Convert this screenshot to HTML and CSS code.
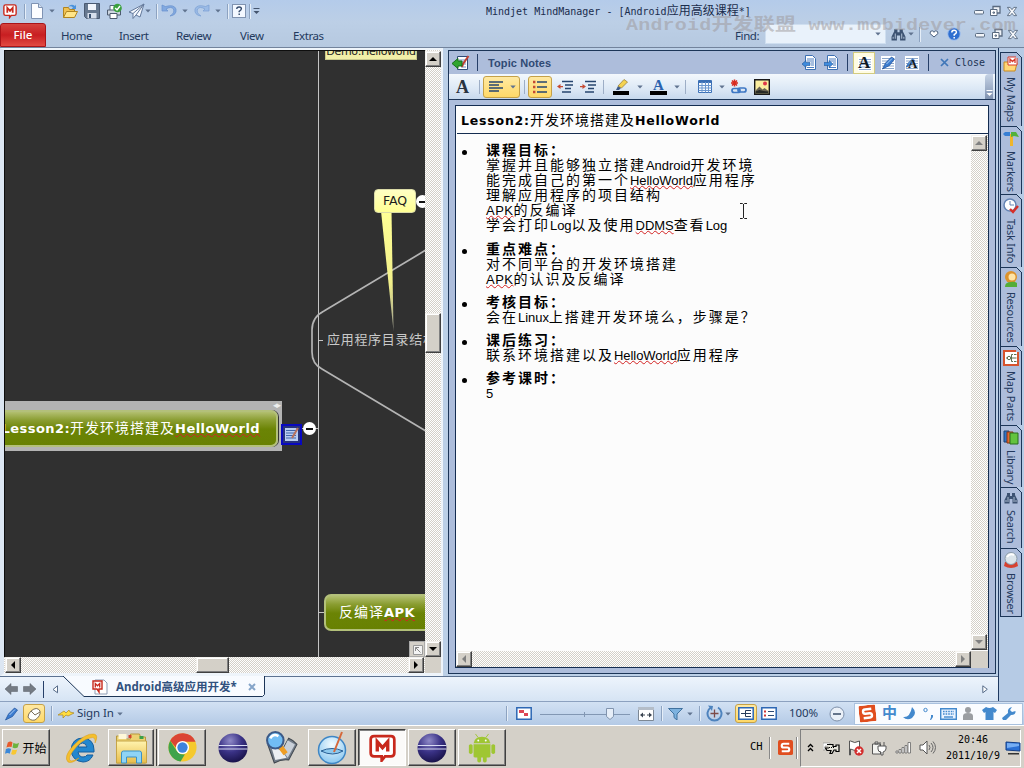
FILE: index.html
```html
<!DOCTYPE html>
<html lang="zh-CN">
<head>
<meta charset="utf-8">
<title>Mindjet MindManager</title>
<link rel="stylesheet" href="styles.css">
</head>
<body>
<svg class="defs" width="0" height="0">
  <defs>
    <radialGradient id="orb" cx=".4" cy=".25" r=".8"><stop offset="0" stop-color="#8f8ac8"/><stop offset=".5" stop-color="#3a3286"/><stop offset="1" stop-color="#161044"/></radialGradient>
    <radialGradient id="sky" cx=".5" cy=".3" r=".8"><stop offset="0" stop-color="#f2fbff"/><stop offset="1" stop-color="#7cc0ee"/></radialGradient>
    <linearGradient id="gold" x2="0" y2="1"><stop offset="0" stop-color="#fff3ae"/><stop offset="1" stop-color="#e8bd4a"/></linearGradient>
    <linearGradient id="call" x2="0" y2="1"><stop offset="0" stop-color="#ffff96"/><stop offset=".6" stop-color="#f2f08a"/><stop offset="1" stop-color="#9a9a90"/></linearGradient>
  </defs>
  <symbol id="m" viewBox="0 0 16 16"><path d="M3 1h10q2 0 2 2v8q0 2-2 2H9.500l-2 2.500V13H3q-2 0-2-2V3q0-2 2-2z" fill="#fff" stroke="#c8281c" stroke-width="1.600"/><path d="M4.900 10V4.300L8 7.800l3.100-3.500V10" fill="none" stroke="#c8281c" stroke-width="2"/></symbol>
  <symbol id="arr" viewBox="0 0 6 4"><path d="M.3.500h5.400L3 3.500z" fill="#60738f"/></symbol>
  <symbol id="doc" viewBox="0 0 14 16"><path d="M1.500.500h7l4 4v11h-11z" fill="#fcfdff" stroke="#7f93b3"/><path d="M8.500.500v4h4" fill="#d4e0f0" stroke="#7f93b3"/></symbol>
  <symbol id="open" viewBox="0 0 16 16"><path d="M1.500 14.500v-10h5l1 2h5v3" fill="#f0c252" stroke="#b08420"/><path d="M1.500 14.500l3-6h11l-3 6z" fill="#ffe58a" stroke="#b08420"/><path d="M6 4q3-4 7-1l1-1.500V6H9.500L11 4.500Q9 2.500 6 4z" fill="#4b93dc"/></symbol>
  <symbol id="save" viewBox="0 0 16 16"><path d="M.5.500h15v15H2.500l-2-2z" fill="#66788f" stroke="#4a5a72"/><path d="M4 1h8v6H4z" fill="#f2f6fc"/><path d="M3.500 10h9v5.500h-9z" fill="#d7dfec"/><path d="M5 11h2v4H5z" fill="#37506f"/></symbol>
  <symbol id="print" viewBox="0 0 16 16"><path d="M4 7V2h6v5" fill="#fff" stroke="#56667d"/><path d="M1.500 6.500h13v5h-13z" fill="#cdd6e0" stroke="#4d5b6e"/><path d="M4 10h7v5H4z" fill="#fff" stroke="#4d5b6e"/><circle cx="11.500" cy="4.500" r="4.300" fill="#3aa03e"/><path d="M9.200 4.500l1.800 2 3-4" fill="none" stroke="#fff" stroke-width="1.400"/></symbol>
  <symbol id="send" viewBox="0 0 17 16"><path d="M16 1L1 9l4 1.500v5L8 12l4 2z" fill="#f5f9ff" stroke="#63799b"/><path d="M16 1L5 10.500M16 1L8 12" fill="none" stroke="#63799b"/></symbol>
  <symbol id="undo" viewBox="0 0 16 14"><path d="M1 1v6h6L5 5q5-3 7.500 0Q14 9 9 12q7-1 6-7-2-5-10.500-2.500z" fill="#82a9e0" stroke="#6790cd" stroke-width=".7"/></symbol>
  <symbol id="redo" viewBox="0 0 16 14"><path d="M15 1v6H9l2-2q-5-3-7.500 0Q2 9 7 12 0 11 1 5q2-5 10.500-2.500z" fill="#9bbbe6" stroke="#7a9fd3" stroke-width=".7"/></symbol>
  <symbol id="min" viewBox="0 0 12 12"><rect x="1.500" y="5.500" width="9" height="3.500" rx="1" fill="#f3f6fa" stroke="#596a80"/></symbol>
  <symbol id="rest" viewBox="0 0 12 12"><path d="M4 4V1.500h7V8H8" fill="#eef2f7" stroke="#596a80" stroke-width="1.300"/><path d="M1.500 4.500H8v6H1.500zM4 7h1.500v1.200H4z" fill="#fff" stroke="#596a80"/></symbol>
  <symbol id="x" viewBox="0 0 12 12"><path d="M1 1.500h3l2 2.500 2-2.500h3L7.700 6 11 10.500H8L6 8l-2 2.500H1L4.300 6z" fill="#f7f9fc" stroke="#596a80"/></symbol>
  <symbol id="bin" viewBox="0 0 14 12"><path d="M3 1h3v3h2V1h3v2l2.500 5v3.500H8.500V7h-3v4.500H.5V8L3 3z" fill="#3c5272"/><path d="M2 8v2M4 5v5M10 5v5M12 8v2" stroke="#a9bad0"/></symbol>
  <symbol id="heart" viewBox="0 0 10 8"><path d="M5 7L1 3.500Q1 .7 3.200.8 4.500 1 5 2.300 5.500 1 6.800.8 9 .7 9 3.500z" fill="#fff" stroke="#4a5f7d"/></symbol>
  <symbol id="help" viewBox="0 0 14 14"><circle cx="7" cy="7" r="6.300" fill="#2f6fd0" stroke="#aac6ef"/><path d="M4.800 5.500q0-2.300 2.300-2.300T9.400 5.200Q9.400 6.200 7.200 7.700v1M7.200 10v1.500" fill="none" stroke="#fff" stroke-width="1.500"/></symbol>
  <symbol id="helpb" viewBox="0 0 14 14"><rect x=".5" y=".5" width="13" height="13" fill="#f3f8ff" stroke="#8093b0"/><path d="M4.800 5q0-2 2.300-2t2.300 1.800Q9.400 6 7.200 7.300v1M7.200 9.500V11" fill="none" stroke="#32496b" stroke-width="1.400"/></symbol>
  <symbol id="cust" viewBox="0 0 7 8"><path d="M.5 1.500h6" stroke="#44556e"/><path d="M.5 4h6L3.500 7z" fill="#44556e"/></symbol>
  <symbol id="tonotes" viewBox="0 0 18 16"><path d="M5.500 1.500h10v13h-10z" fill="#fff" stroke="#2f4b78"/><path d="M7 5h6M7 7h7M7 9h7M9 12h5" stroke="#6a8cbd"/><path d="M16.500 1L11 9l-1 3" stroke="#c24032" stroke-width="2" fill="none"/><path d="M0 8.500l6-5V6h4v5H6v2.500z" fill="#2fa52e" stroke="#186d1e"/></symbol>
  <symbol id="pgl" viewBox="0 0 15 15"><path d="M3.500.500h7l3 3v11h-10z" fill="#fff" stroke="#3d70b2"/><path d="M5 4h7M5 6h7M9 8h3M9 10h3M5 12.500h7" stroke="#4f7fbf"/><path d="M0 9l4-3.500v2h4v3H4v2z" fill="#3f8bdc" stroke="#1e5698" stroke-width=".6"/></symbol>
  <symbol id="pgr" viewBox="0 0 15 15"><path d="M3.500.500h7l3 3v11h-10z" fill="#fff" stroke="#3d70b2"/><path d="M5 4h7M5 6h7M9 8h3M9 10h3M5 12.500h7" stroke="#4f7fbf"/><path d="M9 9L5 5.500v2H0v3h5v2z" fill="#3f8bdc" stroke="#1e5698" stroke-width=".6"/></symbol>
  <symbol id="lines" viewBox="0 0 14 14"><path d="M0 0h14v14H0z" fill="#fff"/><path d="M1 2.500h12M1 5h12M1 7.500h12M1 10h12M1 12.500h12" stroke="#8ba6cb"/></symbol>
  <symbol id="pen" viewBox="0 0 14 14"><path d="M1.500 13L4.500 7l6-6 3 2L8.500 9.500z" fill="#3b7cd0" stroke="#1d4f98" stroke-width=".7"/><path d="M5.500 8l5.500-5.500" stroke="#a9cdf5"/></symbol>
  <symbol id="al" viewBox="0 0 16 12"><path d="M1 1h14M1 4h10M1 7h14M1 10h10" stroke="#27466f" stroke-width="1.300"/></symbol>
  <symbol id="bul" viewBox="0 0 16 14"><path d="M5 2h10M5 7h10M5 12h10" stroke="#27466f" stroke-width="1.500"/><path d="M1 .8h2.400v2.400H1zM1 5.800h2.400v2.400H1zM1 10.800h2.400v2.400H1z" fill="#c54a32"/></symbol>
  <symbol id="outd" viewBox="0 0 16 14"><path d="M5 1.500h11M8 5h8M8 8.500h6M5 12h9" stroke="#27466f" stroke-width="1.400"/><path d="M0 6.500L3.500 4v2H6v1.200H3.500V9z" fill="#c54a32"/></symbol>
  <symbol id="ind" viewBox="0 0 16 14"><path d="M5 1.500h11M8 5h8M8 8.500h6M5 12h9" stroke="#27466f" stroke-width="1.400"/><path d="M6 6.500L2.500 4v2H0v1.200h2.500V9z" fill="#c54a32"/></symbol>
  <symbol id="hl" viewBox="0 0 18 16"><path d="M1 12h16v4H1z" fill="#000"/><path d="M4 11l2-4 3 2-2 2z" fill="#3e5b8b"/><path d="M6 7l6-6.500L15.500 3 9.500 9z" fill="#f4d352" stroke="#8f7630" stroke-width=".7"/></symbol>
  <symbol id="table" viewBox="0 0 14 13"><path d="M.5.500h13v12H.5z" fill="#f6faff" stroke="#3a6fb5"/><path d="M.5 2h13" stroke="#3a6fb5" stroke-width="2"/><path d="M.5 5.500h13M.5 8h13M.5 10.500h13M4 2v10.500M7.500 2v10.500M10.500 2v10.500" stroke="#6b97cf"/></symbol>
  <symbol id="link" viewBox="0 0 17 15"><path d="M4.500.500v7M1 4h7M2 1.500l5 5M7 1.500l-5 5" stroke="#d92b20" stroke-width="1.500"/><rect x="2" y="9.500" width="8" height="4" rx="2" fill="none" stroke="#3f78c4" stroke-width="1.700"/><rect x="8" y="9" width="8" height="4" rx="2" fill="none" stroke="#3f78c4" stroke-width="1.700"/></symbol>
  <symbol id="pic" viewBox="0 0 16 16"><path d="M.7.700h14.600v14.600H.7z" fill="#fbeea0" stroke="#18181a" stroke-width="1.400"/><path d="M1.500 13V11.500L5.500 7.500l3 3 2-1.500 4 3V13z" fill="#6b6553"/><path d="M1.400 12.500l4-1.500 4 1 5 .5V14.600H1.400z" fill="#272a26"/><circle cx="11" cy="4.500" r="2" fill="#de3848"/></symbol>
  <symbol id="au" viewBox="0 0 8 8"><path d="M0 6h8L4 2z"/></symbol>
  <symbol id="ad" viewBox="0 0 8 8"><path d="M0 2h8L4 6z"/></symbol>
  <symbol id="ale" viewBox="0 0 8 8"><path d="M6 0v8L2 4z"/></symbol>
  <symbol id="ari" viewBox="0 0 8 8"><path d="M2 0v8l4-4z"/></symbol>
  <symbol id="mapsi" viewBox="0 0 16 16"><path d="M1 6h5l1 1h7l-2 8H1z" fill="#ffd777" stroke="#c98a20"/><path d="M5 1h9v8H5z" fill="#fff" stroke="#d63a2c"/><path d="M7 7V3l2.500 2.500L12 3v4" fill="none" stroke="#d63a2c" stroke-width="1.300"/></symbol>
  <symbol id="mark" viewBox="0 0 16 16"><path d="M7 4h3v12H7z" fill="#efb52a"/><path d="M0 4l2-2h5v4H2z" fill="#377fd4"/><path d="M8 2h5l3 5-5-1-3 1z" fill="#52b13a"/></symbol>
  <symbol id="task" viewBox="0 0 16 16"><circle cx="7" cy="7" r="6" fill="#fff" stroke="#6484b4" stroke-width="1.500"/><path d="M7 3v4h4" fill="none" stroke="#6484b4"/><path d="M7 11l3 3 5-6" fill="none" stroke="#d62f29" stroke-width="2.400"/></symbol>
  <symbol id="res" viewBox="0 0 16 16"><circle cx="8" cy="6" r="6" fill="#dc922c"/><circle cx="9" cy="6" r="3.500" fill="#ffe4a6"/><path d="M2 16q0-5 6-5 3-1 6 1v4z" fill="#54ad38"/></symbol>
  <symbol id="parts" viewBox="0 0 16 16"><path d="M1 1h14v14H1z" fill="#fff" stroke="#d7532e" stroke-width="2"/><path d="M3 8h3M10 4.500H8.500v7H10M11 4.500h2.500M9 8h4.500M11 11.500h2.500" stroke="#5e7050" fill="none"/><circle cx="6" cy="8" r="1.700" fill="#fff" stroke="#5e7050"/></symbol>
  <symbol id="lib" viewBox="0 0 16 16"><path d="M1 2h5v11H1z" fill="#2d74c8" stroke="#1d4273"/><path d="M4 3h6v11H4z" fill="#e46831" stroke="#843516"/><path d="M7 4h8v11H7z" fill="#63c33e" stroke="#286c1d"/></symbol>
  <symbol id="brow" viewBox="0 0 16 16"><path d="M2 10h12l1 4q-7 4-14 0z" fill="#d74130"/><circle cx="8" cy="6.500" r="6" fill="#dbe4ea" stroke="#8a9aa8"/><path d="M4 5q3-4 7-2" stroke="#fff" stroke-width="2" fill="none"/></symbol>
  <symbol id="nav" viewBox="0 0 13 12"><path d="M0 6l6-5.500V3.500h6.500v5H6v3z" fill="#747b84" stroke="#565c64" stroke-width=".5"/></symbol>
  <symbol id="mouse" viewBox="0 0 16 14"><path d="M5 4q6-5 9 0 1 5-5 9-5 1-7-3 0-3 3-6z" fill="#fff" stroke="#7b705a"/><path d="M5 4l4 4M9 8l5-3" stroke="#7b705a" fill="none"/></symbol>
  <symbol id="bolt" viewBox="0 0 16 10"><path d="M0 6l6-4 2 2 3-3 1 2 4 1-6 3-2-1-3 3V6z" fill="#ffdc3f" stroke="#aa8724" stroke-width=".7"/></symbol>
  <symbol id="filt" viewBox="0 0 15 12"><path d="M.5.500h14L9 6v6L6 9.500V6z" fill="#7db2df" stroke="#41729f"/></symbol>
  <symbol id="rot" viewBox="0 0 17 17"><path d="M5 2.500A7 7 0 1 0 12 2.500" fill="none" stroke="#4e83bd" stroke-width="2"/><path d="M2 .5l5 .5-1 5z" fill="#4e83bd"/><path d="M8.500 4.500v8M4.500 8.500h8" stroke="#7d4b49" stroke-width="1.300"/></symbol>
  <symbol id="mapv" viewBox="0 0 16 13"><path d="M.8.800h14.400v11.400H.8z" fill="#fff" stroke="#2d67b4" stroke-width="1.500"/><path d="M3 6.500h4M13 3.500H7.500v6H13M7.500 6.500H13" stroke="#273c5b" fill="none"/></symbol>
  <symbol id="outv" viewBox="0 0 16 13"><path d="M.8.800h14.400v11.400H.8z" fill="#fff" stroke="#2d67b4" stroke-width="1.500"/><path d="M7 4.500h6M7 8.500h6" stroke="#2d4b75"/><path d="M3 3.500h2v2H3zM3 7.500h2v2H3z" fill="#d0383a"/></symbol>
  <symbol id="over" viewBox="0 0 16 13"><path d="M.8.800h14.400v11.400H.8z" fill="#fff" stroke="#2d67b4" stroke-width="1.500"/><path d="M3 3h5v3H3zM8 6h4v3H8z" fill="#dc4654"/></symbol>
  <symbol id="fit" viewBox="0 0 16 14"><path d="M.5.500h15v13H.5z" fill="#fff" stroke="#7c8794"/><path d="M0 0h16v3H0z" fill="#b4bdc8"/><path d="M2 8l3-2.500v2h2v1H5v2zM14 8l-3-2.500v2H9v1h2v2z" fill="#3b4451"/></symbol>
  <symbol id="slide" viewBox="0 0 90 14"><path d="M0 7.500h90M44.500 5v5" stroke="#8297b3"/><path d="M66.500 1.500h7v8l-3.500 3-3.500-3z" fill="#e6eef8" stroke="#8194ae"/></symbol>
  <symbol id="s" viewBox="0 0 16 16"><rect width="16" height="16" rx="2" fill="#e04e1f"/><path d="M12 4H6Q4 4 4 6t2 2h4q2 0 2 2t-2 2H4" fill="none" stroke="#fff" stroke-width="2.300"/></symbol>
  <symbol id="moon" viewBox="0 0 13 13"><path d="M9 0q6 6 0 11-5 3-9-1 7 1 9-10z" fill="#4389cd"/></symbol>
  <symbol id="punct" viewBox="0 0 11 14"><circle cx="2.500" cy="3" r="1.700" fill="none" stroke="#4389cd"/><path d="M8 8h2v2L8 13H7l1-3z" fill="#4389cd"/></symbol>
  <symbol id="kbd" viewBox="0 0 17 12"><path d="M.7.700h15.600v10.600H.7z" fill="#eaf3ff" stroke="#4389cd" stroke-width="1.400"/><path d="M3 3.500h11M3 6h11" stroke="#4389cd" stroke-width="1.600" stroke-dasharray="1.600 1"/><path d="M4 9h9" stroke="#4389cd" stroke-width="1.400"/></symbol>
  <symbol id="per" viewBox="0 0 10 13"><circle cx="5" cy="3" r="3" fill="#9b9ea2"/><path d="M0 13V9q0-3 5-3t5 3v4z" fill="#9b9ea2"/></symbol>
  <symbol id="shirt" viewBox="0 0 15 13"><path d="M4 0q3.500 2 7 0l4 3-2 3-1.500-1v8h-8V5L2 6 0 3z" fill="#4389cd"/></symbol>
  <symbol id="wr" viewBox="0 0 14 13"><path d="M10 0L8 3l2 2 3.500-1Q14 8 9 8l-5 5H1l-1-2 6-5Q5 1 10 0z" fill="#4389cd"/></symbol>
  <symbol id="win" viewBox="0 0 16 16"><path d="M3 2q3-2 5 0L7 7Q4 6 1.500 7.500z" fill="#e75a2b"/><path d="M9 2.500q3 2 6 0l-1.500 5q-3 1.500-5.500 0z" fill="#6cb33e"/><path d="M1 9q3-1.500 5.500 0l-1.500 5Q3 12.500 0 14z" fill="#3b88d8"/><path d="M8 9.500q2.500 1.500 5 0L11.500 14.500q-3 1.500-5 0z" fill="#f8c732"/></symbol>
  <symbol id="ie" viewBox="0 0 32 32"><path d="M25 20H12q1 5 5 5 3 0 4-2h6q-3 7-10 7Q6 29 5 18 6 6 17 6q11 1 11 12v2zM12 15h9q-1-4-4.500-4T12 15z" fill="#2387cf" stroke="#155f9f"/><path d="M2 30q-5-5 5-16Q19 1 28 2q5 1 1 9 1-7-5-5-9 2-17 13-6 8-2 10 3 0 8-3-7 6-11 4z" fill="#f4bf2e" stroke="#d89a18" stroke-width=".5"/></symbol>
  <symbol id="fold" viewBox="0 0 32 32"><path d="M1 7V4h8l2 3h4V2h9l1 3h5v26H1z" fill="#ecd172" stroke="#b6983e"/><path d="M3 2h8v5H3z" fill="#fff8d8"/><path d="M13 3h3v3h-3z" fill="#d5452f"/><path d="M24 4h4v3h-4z" fill="#3b9f49"/><path d="M1 9h30v22H1z" fill="url(#gold)" stroke="#c6a446"/><path d="M6 31V21q0-2 2-2h16q2 0 2 2v10h-5v-6H11v6z" fill="#8fd4f5" stroke="#3b91c6"/></symbol>
  <symbol id="chr" viewBox="0 0 32 32"><circle cx="16" cy="16" r="14.500" fill="#f5c92d"/><path d="M3.300 9A14.500 14.500 0 0 1 29.500 10H16q-6 0-6 7z" fill="#db4535"/><path d="M3.300 9L10.500 20q3 4 8 3L14 30.400A14.500 14.500 0 0 1 3.300 9z" fill="#40a34b"/><circle cx="16" cy="16" r="6.800" fill="#fff"/><circle cx="16" cy="16" r="5.300" fill="#3e83dc"/></symbol>
  <symbol id="ecl" viewBox="0 0 32 32"><circle cx="16" cy="16" r="14.500" fill="url(#orb)"/><path d="M1.500 13.500h29M1.500 17h29" stroke="#d9dcf3" stroke-width="1.200"/></symbol>
  <symbol id="sch" viewBox="0 0 32 32"><path d="M3 14l14 4 6-11q5 2 8 6l-8 15q-7-1-14 3z" fill="#727c89" stroke="#40474f"/><path d="M6 15l10 4 5 7-11 2z" fill="#eceff3"/><path d="M22 9l-5 10 5 7 7-13z" fill="#c9d0d9"/><path d="M14 14l6 8" stroke="#ef9e25" stroke-width="5"/><circle cx="10" cy="9" r="8" fill="#71bdf4" stroke="#3c5a88" stroke-width="2"/><path d="M5 7q3-5 8-2" stroke="#fff" stroke-width="2.500" fill="none"/></symbol>
  <symbol id="ink" viewBox="0 0 32 32"><circle cx="16" cy="18" r="13.500" fill="url(#sky)" stroke="#3e86c5" stroke-width="1.500"/><path d="M5 19q11-5 22 0-10 6-22 0z" fill="#8ec9ee" stroke="#285f95"/><path d="M26 0l-6 15-2 5" stroke="#d6683a" stroke-width="2" fill="none"/></symbol>
  <symbol id="andr" viewBox="0 0 32 32"><path d="M7 11q1-7 9-7t9 7zM7 12h18v13q0 1-2 1h-2v4q-2 3-4 0v-4h-2v4q-2 3-4 0v-4H9q-2 0-2-1zM2 13q2-2 4 0v8q-2 3-4 0zM26 13q2-2 4 0v8q-2 3-4 0z" fill="#9fc633"/><path d="M9 1l3 4M23 1l-3 4" stroke="#9fc633"/><circle cx="12" cy="8" r="1" fill="#fff"/><circle cx="20" cy="8" r="1" fill="#fff"/></symbol>
  <symbol id="chev" viewBox="0 0 7 9"><path d="M1 4l2.500-2.500L6 4M1 8l2.500-2.500L6 8" fill="none" stroke="#000" stroke-width="1.300"/></symbol>
  <symbol id="cam" viewBox="0 0 17 14"><path d="M0 2h7v3H2v4H0z" fill="#fff" stroke="#777" stroke-width=".5"/><path d="M4 3.500h6v2h3V4h3v6.500h-3V9h-2l-2 3.500H7l1-3H4L2.500 7H6" fill="#e7e5dc" stroke="#000" stroke-width="1.200"/><path d="M6 6.500h5" stroke="#000" stroke-dasharray="1 1"/></symbol>
  <symbol id="flag" viewBox="0 0 16 16"><path d="M1.500 15V1h1q4 3 9 0v8q-5 3-9 0v6z" fill="#fff" stroke="#555"/><circle cx="11" cy="11" r="4.700" fill="#d32f2f"/><path d="M9 9l4 4M13 9l-4 4" stroke="#fff" stroke-width="1.500"/></symbol>
  <symbol id="plug" viewBox="0 0 16 16"><path d="M1.500 4h8v10h-8zM4 2h3v2H4z" fill="#f4f4f1" stroke="#555"/><path d="M7 6h8v3q-1 3-3 3v3h-2v-3q-3 0-3-3zM9 2v4M13 2v4" fill="#fff" stroke="#555"/></symbol>
  <symbol id="sig" viewBox="0 0 17 13"><path d="M1 10h2v2H1zM4 8.500h2V12H4zM7 6.500h2V12H7zM10 4.500h2V12h-2zM13 1.500h2.500V12H13z" fill="#fff" stroke="#666" stroke-width=".8"/></symbol>
  <symbol id="spk" viewBox="0 0 17 15"><path d="M1 5h3l4-4v13l-4-4H1z" fill="#fff" stroke="#555"/><path d="M10 5q2 2.500 0 5M12 3q4 4.500 0 9M14 1.500q5 6 0 12" fill="none" stroke="#666"/></symbol>
  <symbol id="mon" viewBox="0 0 16 14"><path d="M1 1l14 1v8L1 9z" fill="#2c70d4" stroke="#123d85"/><path d="M2 2l12 .8V5L2 7z" fill="#77aef3"/><path d="M3 12h11v1.500H3z" fill="#333"/></symbol>
</svg>

<div class="app">
  <header class="title">
    <svg width="14" height="16"><use href="#m"/></svg><i class="sep"></i>
    <svg width="14" height="16"><use href="#doc"/></svg><svg width="6" height="4"><use href="#arr"/></svg>
    <svg width="16" height="16"><use href="#open"/></svg><svg width="16" height="16"><use href="#save"/></svg><svg width="16" height="17"><use href="#print"/></svg><svg width="17" height="16"><use href="#send"/></svg><svg width="6" height="4"><use href="#arr"/></svg><i class="sep"></i>
    <svg width="16" height="14"><use href="#undo"/></svg><svg width="6" height="4"><use href="#arr"/></svg><svg width="16" height="14"><use href="#redo"/></svg><svg width="6" height="4"><use href="#arr"/></svg><i class="sep"></i>
    <svg width="14" height="14"><use href="#helpb"/></svg><i class="sep"></i><svg width="7" height="8"><use href="#cust"/></svg>
    <span class="caption">Mindjet MindManager - [Android<b>应用高级课程</b>*]</span>
    <svg width="12" height="12"><use href="#min"/></svg><svg width="12" height="12"><use href="#rest"/></svg><svg width="12" height="11"><use href="#x"/></svg>
  </header>
  <nav class="ribbon">
    <span class="file">File</span><span>Home</span><span>Insert</span><span>Review</span><span>View</span><span>Extras</span><span>Find:</span>
    <span class="combo"><svg width="6" height="4"><use href="#arr"/></svg></span>
    <svg width="15" height="13"><use href="#bin"/></svg><svg width="6" height="4"><use href="#arr"/></svg><i class="sep"></i><svg width="10" height="8"><use href="#heart"/></svg><svg width="14" height="14"><use href="#help"/></svg>
    <svg width="12" height="12"><use href="#min"/></svg><svg width="12" height="12"><use href="#rest"/></svg><svg width="12" height="11"><use href="#x"/></svg>
  </nav>
  <div class="mark">Android<b>开发联盟</b> www.mobidever.com</div>

  <div class="middle">
    <div class="left">
      <div class="panes">
        <section class="map">
          <div class="canvas">
            <svg class="lines" width="420" height="606">
              <path d="M313.500 0v606M296 377.500h18M314 289.500h4M314 561.500h5" stroke="#c4c4c4" fill="none"/>
              <path d="M421 199L319 260Q307 266 307 279V301Q307 313 317 318L421 380" stroke="#b4b4b4" stroke-width="1.700" fill="none"/>
              <path d="M376 160h10.500l2 120z" fill="url(#call)"/>
            </svg>
            <div class="demo">Demo:Helloworld</div>
            <div class="faq">FAQ</div>
            <div class="minus m1"></div>
            <div class="branch">应用程序目录结构</div>
            <div class="sel"><span class="grip">◂▸</span><div class="node n1"><b>Lesson2:</b>开发环境搭建及<b class="sp">HelloWorld</b></div></div>
            <svg class="note" width="21" height="21" viewBox="0 0 21 21"><path d="M1 1h19v19H1z" fill="#26327c" stroke="#0808c0" stroke-width="2"/><path d="M4 4h11l2 2v11H4z" fill="#b9cdf3"/><path d="M5 6.500h10M5 9h10M5 11.500h10M5 14h10" stroke="#4268ac"/><path d="M17 4l-6 10" stroke="#b9725d" stroke-width="2"/></svg>
            <div class="minus m2"></div>
            <div class="node n2">反编译<b class="sp">APK</b></div>
          </div>
          <div class="vbar"><i class="btn"><svg width="8" height="8"><use href="#au"/></svg></i><i class="thumb"></i><i class="btn"><svg width="8" height="8"><use href="#ad"/></svg></i></div>
          <div class="hbar"><i class="btn"><svg width="8" height="8"><use href="#ale"/></svg></i><i class="thumb"></i><i class="btn"><svg width="8" height="8"><use href="#ari"/></svg></i></div>
          <i class="corner"></i>
          <svg class="zoomfit" width="16" height="16"><path d="M0 0h16v16H0z" fill="#d4d0c8"/><path d="M3.500 3.500h9v9h-9z" fill="#f4f4f4" stroke="#999"/><path d="M5.500 9V5.500H9M5.500 5.500l5 5" stroke="#888" fill="none"/></svg>
        </section>
        <section class="notes">
          <div class="nhead">
            <svg width="18" height="16"><use href="#tonotes"/></svg><i class="dark"></i><span class="ntitle">Topic Notes</span>
            <svg width="15" height="15"><use href="#pgl"/></svg><svg width="15" height="15"><use href="#pgr"/></svg><i class="dark"></i>
            <span class="abtn"><svg width="14" height="14"><use href="#lines"/></svg><b>A</b></span>
            <span class="ai"><svg width="14" height="14"><use href="#lines"/></svg><svg width="14" height="14"><use href="#pen"/></svg></span>
            <span class="ai"><svg width="14" height="14"><use href="#lines"/></svg><svg width="10" height="14"><use href="#pen"/></svg><b>A</b></span>
            <i class="dark"></i><svg width="9" height="9" viewBox="0 0 9 9"><path d="M1 1l7 7M8 1L1 8" stroke="#3f76b8" stroke-width="1.700"/></svg><span class="close">Close</span>
          </div>
          <div class="ntool">
            <span class="serif">A</span><i class="tsep"></i>
            <span class="hot"><svg width="16" height="12"><use href="#al"/></svg><svg width="6" height="4"><use href="#arr"/></svg></span><i class="tsep"></i>
            <span class="hot"><svg width="16" height="14"><use href="#bul"/></svg></span>
            <svg width="16" height="14"><use href="#outd"/></svg><svg width="16" height="14"><use href="#ind"/></svg><i class="tsep"></i>
            <svg width="18" height="16"><use href="#hl"/></svg><svg width="6" height="4"><use href="#arr"/></svg><span class="fc">A</span><svg width="6" height="4"><use href="#arr"/></svg><i class="tsep"></i>
            <svg width="14" height="13"><use href="#table"/></svg><svg width="6" height="4"><use href="#arr"/></svg><svg width="17" height="15"><use href="#link"/></svg><svg width="16" height="16"><use href="#pic"/></svg>
            <span class="ovf"><svg width="7" height="8" viewBox="0 0 7 8"><path d="M.5 1.500h6" stroke="#fff"/><path d="M.5 4h6L3.500 7z" fill="#fff"/></svg></span>
          </div>
          <div class="paper">
            <h1><b>Lesson2:</b>开发环境搭建及<b>HelloWorld</b></h1>
            <div class="body">
              <div class="text">
                <ul>
                  <li><h2>课程目标：</h2><p>掌握并且能够独立搭建<s>Android</s>开发环境</p><p>能完成自己的第一个<s class="sp">HelloWorld</s>应用程序</p><p>理解应用程序的项目结构</p><p><s class="sp apk">APK</s>的反编译</p><p>学会打印<s>Log</s>以及使用<s class="sp">DDMS</s>查看<s>Log</s></p></li>
                  <li><h2>重点难点：</h2><p>对不同平台的开发环境搭建</p><p><s class="sp apk">APK</s>的认识及反编译</p></li>
                  <li><h2>考核目标：</h2><p>会在<s>Linux</s>上搭建开发环境么，步骤是？</p></li>
                  <li><h2>课后练习：</h2><p>联系环境搭建以及<s class="sp">HelloWorld</s>应用程序</p></li>
                  <li><h2>参考课时：</h2><p><s>5</s></p></li>
                </ul>
                <svg class="ibeam" width="7" height="16"><path d="M0 .5h2.500l1 1 1-1H7M3.500 1v14M0 15.500h2.500l1-1 1 1H7" stroke="#222" fill="none"/></svg>
              </div>
              <div class="vbar"><i class="btn dis"><svg width="8" height="8"><use href="#au"/></svg></i><i class="btn dis"><svg width="8" height="8"><use href="#ad"/></svg></i></div>
              <div class="hbar"><i class="btn dis"><svg width="8" height="8"><use href="#ale"/></svg></i><i class="btn dis"><svg width="8" height="8"><use href="#ari"/></svg></i></div>
              <i class="corner"></i>
            </div>
          </div>
        </section>
      </div>
      <div class="docs">
        <svg width="13" height="12"><use href="#nav"/></svg><svg class="flip" width="13" height="12"><use href="#nav"/></svg><i class="dark"></i>
        <svg width="6" height="9" viewBox="0 0 6 9"><path d="M5.500.8v7L1 4.500z" fill="#fff" stroke="#566b88"/></svg>
        <div class="doctab"><svg class="shape" width="203" height="22"><path d="M0 0l21 20.500H199.500l2-2V0z" fill="#f8fbff"/><path d="M0 0l21 20.500H199.500l2-2V0" fill="none" stroke="#1c3557"/></svg>
          <svg width="16" height="16" viewBox="0 0 16 16"><path d="M3 1h9l3 3v11H3z" fill="#fff" stroke="#8d9db5"/><path d="M1 2h9v8H7v3l-2-3H1z" fill="#fff" stroke="#c8281c" stroke-width="1.400"/><path d="M3.300 8.500V4.500l2.200 2.300 2.200-2.300v4" fill="none" stroke="#c8281c" stroke-width="1.300"/></svg>
          <span>Android高级应用开发*</span>
          <svg width="8" height="8" viewBox="0 0 8 8"><path d="M1 1l6 6M7 1L1 7" stroke="#86a5c9" stroke-width="2"/></svg></div>
        <svg width="6" height="9" viewBox="0 0 6 9"><path d="M.8.800v7l4.500-3.500z" fill="#fff" stroke="#566b88"/></svg>
      </div>
    </div>
    <aside class="side">
      <div class="t t1"><svg width="16" height="16"><use href="#mapsi"/></svg><span>My Maps</span></div>
      <div class="t t2"><svg width="16" height="16"><use href="#mark"/></svg><span>Markers</span></div>
      <div class="t t3"><svg width="16" height="16"><use href="#task"/></svg><span>Task Info</span></div>
      <div class="t t4"><svg width="16" height="16"><use href="#res"/></svg><span>Resources</span></div>
      <div class="t t5"><svg width="16" height="16"><use href="#parts"/></svg><span>Map Parts</span></div>
      <div class="t t6"><svg width="16" height="16"><use href="#lib"/></svg><span>Library</span></div>
      <div class="t t7"><svg width="14" height="14"><use href="#bin"/></svg><span>Search</span></div>
      <div class="t t8"><svg width="16" height="16"><use href="#brow"/></svg><span>Browser</span></div>
    </aside>
  </div>

  <footer class="status">
    <svg width="14" height="14"><use href="#pen"/></svg><span class="hot"><svg width="16" height="14"><use href="#mouse"/></svg></span><i class="sep"></i>
    <svg width="16" height="10"><use href="#bolt"/></svg><span>Sign In</span><svg width="6" height="4"><use href="#arr"/></svg><i class="sep"></i>
    <svg width="16" height="13"><use href="#over"/></svg><svg width="90" height="14"><use href="#slide"/></svg><svg width="16" height="14"><use href="#fit"/></svg><i class="sep"></i>
    <svg width="15" height="12"><use href="#filt"/></svg><svg width="6" height="4"><use href="#arr"/></svg><i class="sep"></i>
    <svg width="17" height="17"><use href="#rot"/></svg><svg width="6" height="4"><use href="#arr"/></svg>
    <span class="hot"><svg width="16" height="13"><use href="#mapv"/></svg></span><svg width="16" height="13"><use href="#outv"/></svg><span>100%</span>
    <svg width="16" height="16" viewBox="0 0 16 16"><circle cx="8" cy="8" r="7" fill="#eaf0f8" stroke="#7e90aa"/><path d="M4 8h8" stroke="#65758b" stroke-width="2"/></svg>
    <div class="ime"><svg class="tilt" width="17" height="17"><use href="#s"/></svg><b>中</b><svg width="13" height="13"><use href="#moon"/></svg><svg width="11" height="14"><use href="#punct"/></svg><svg width="17" height="12"><use href="#kbd"/></svg><svg width="10" height="13"><use href="#per"/></svg><svg width="15" height="13"><use href="#shirt"/></svg><svg width="14" height="13"><use href="#wr"/></svg></div>
  </footer>

  <div class="taskbar">
    <span class="tb start"><svg width="15" height="16"><use href="#win"/></svg>开始</span>
    <span class="ql"><svg width="32" height="32"><use href="#ie"/></svg></span>
    <span class="tb stack"><svg width="33" height="32"><use href="#fold"/></svg></span>
    <span class="tb"><svg width="31" height="31"><use href="#chr"/></svg></span>
    <span class="ql"><svg width="32" height="32"><use href="#ecl"/></svg></span>
    <span class="ql"><svg width="33" height="33"><use href="#sch"/></svg></span>
    <span class="tb"><svg width="32" height="34"><use href="#ink"/></svg></span>
    <span class="tb on"><svg width="27" height="28"><use href="#m"/></svg></span>
    <span class="tb"><svg width="32" height="32"><use href="#ecl"/></svg></span>
    <span class="tb"><svg width="30" height="32"><use href="#andr"/></svg></span>
    <span class="ch">CH</span><i class="groove"></i><svg width="15" height="15"><use href="#s"/></svg><i class="groove"></i>
    <div class="tray"><svg width="7" height="9"><use href="#chev"/></svg><svg width="17" height="14"><use href="#cam"/></svg><svg width="16" height="16"><use href="#flag"/></svg><svg width="16" height="16"><use href="#plug"/></svg><svg width="17" height="13"><use href="#sig"/></svg><svg width="17" height="15"><use href="#spk"/></svg><span class="clock">20:46<br>2011/10/9</span><svg width="16" height="14"><use href="#mon"/></svg></div>
  </div>
</div>
</body>
</html>
```
FILE: styles.css
```css
* { box-sizing: border-box; }
body { margin: 0; width: 1024px; height: 768px; overflow: hidden; font-family: "Noto Sans", "Noto Sans CJK SC", sans-serif; font-size: 11.5px; color: #23395d; }
svg { display: block; flex: none; }
i { font-style: normal; }
.defs { position: absolute; }
.app { position: relative; width: 1024px; height: 768px; display: flex; flex-direction: column; background: #b6cbe5; }

/* Title bar and ribbon */
.title { height: 22px; display: grid; align-items: center; padding-left: 3px; background: linear-gradient(#b4cbea, #bccfe6);
  grid-template-columns: 21px 6px 19px 13px 22px 22px 22px 17px 11px 5px 21px 12px 21px 12px 5px 17px 4px 233px 487px 16px 17px 14px; }
.sep { width: 2px; height: 15px; border-left: 1px solid #8da3c1; border-right: 1px solid #e5eef8; }
.caption { font: 10px/14px "DejaVu Sans Mono", monospace; white-space: nowrap; color: #1a2c4c; }
.caption b { font: 12px/14px "Noto Sans CJK SC", sans-serif; }
.ribbon { height: 26px; display: grid; align-items: center; background: linear-gradient(#bccfe6, #b6c9e0); border-bottom: 1px solid #72839c; white-space: nowrap; letter-spacing: -.4px;
  grid-template-columns: 61px 58px 57px 64px 53px 442px 30px 126px 17px 11px 10px 18px 27px 17px 16px 17px; }
.ribbon > svg, .ribbon > .sep { margin-top: -1px; }
.ribbon > span { padding-top: 1px; }
.ribbon .file { width: 46px; height: 24px; align-self: end; padding: 3px 0 0; text-align: center; color: #fff; border-radius: 3px 3px 0 0; line-height: 15px; border: 1px solid #a91418; background: linear-gradient(#d5443e, #c81e21 50%, #e24a42); font-weight: 500; letter-spacing: 0; }
.ribbon .combo { width: 121px; height: 20px; padding: 0 4px 0 0; margin-top: -2px; background: #e9f2fb; border: 1px solid #cfdff0; display: flex; align-items: center; justify-content: flex-end; }
.mark { position: absolute; left: 626px; top: 10px; font: bold 20px/24px "Liberation Mono", monospace; letter-spacing: .2px; color: rgba(156, 150, 152, .5); white-space: nowrap; z-index: 3; transform: scaleY(.82); }
.mark b { font: bold 21px/24px "Noto Sans CJK SC", sans-serif; }

/* Workspace */
.middle { height: 653px; display: flex; }
.left { width: 999px; border-right: 1px solid #1f3960; display: flex; flex-direction: column; }
.panes { height: 628px; display: flex; gap: 5px; background: #bcd0e7; }
.map { width: 443px; border: 2px solid #eef4fa; border-left: 4px solid #dce6f2; border-bottom: 3px solid #eef4fa; outline: 0; display: grid; grid-template-columns: 421px 16px; grid-template-rows: 607px 16px; position: relative; }
.canvas { position: relative; overflow: hidden; background: #303030; border-left: 1px solid #0e0e0e; border-top: 1px solid #0e0e0e; }
.lines { position: absolute; inset: 0; }
.demo { position: absolute; left: 320px; top: -8px; width: 92px; height: 17px; background: #f1efa8; border: 1px solid #c8c88c; font: 11px/15px "DejaVu Sans", sans-serif; color: #222; text-align: center; white-space: nowrap; letter-spacing: -.35px; }
.faq { position: absolute; left: 369px; top: 138px; width: 42px; height: 24px; border: 1px solid #dadaa6; border-radius: 4px; background: linear-gradient(#ffffc4, #ffff94); color: #1c1c1c; font: 12.5px/22px "DejaVu Sans", sans-serif; text-align: center; }
.branch { position: absolute; left: 322px; top: 278px; font: 13px/20px "Noto Sans CJK SC", sans-serif; letter-spacing: .7px; color: #c9c9c9; white-space: nowrap; }
.sel { position: absolute; left: 0; top: 350px; width: 277px; height: 50px; background: #b3b3b3; }
.grip { position: absolute; right: 2px; top: -1px; font: 9px/10px "DejaVu Sans", sans-serif; color: #ededed; letter-spacing: -1px; }
.node { background: linear-gradient(#b2bf70, #8a9d31 25%, #6b8405 52%, #688102); border: 2px solid #b3c07a; color: #fff; font: 14px/30px "Noto Sans CJK SC", sans-serif; letter-spacing: 1px; white-space: nowrap; }
.node b { font: bold 13px/28px "DejaVu Sans", sans-serif; letter-spacing: .45px; }
.n1 { position: absolute; left: 0; top: 9px; width: 273px; height: 37px; border-left: 0; border-radius: 0 7px 7px 0; box-shadow: 1px 0 #333; text-indent: -3.5px; }
.n2 { position: absolute; left: 319px; top: 543px; width: 112px; height: 37px; border-radius: 7px; padding-left: 13px; }
.sp { text-decoration: underline wavy #d32222 .7px; text-underline-offset: 0; text-decoration-skip-ink: none; }
.note { position: absolute; left: 276px; top: 373px; }
.minus { position: absolute; width: 13px; height: 13px; border-radius: 50%; background: linear-gradient(#111, #111) center / 7px 2px no-repeat #fff; }
.m1 { left: 411px; top: 144px; }
.m2 { left: 298px; top: 371px; }
.vbar, .hbar { background: repeating-conic-gradient(#fff 0 25%, #d4d0c8 0 50%) 0 0 / 2px 2px; display: flex; }
.vbar { flex-direction: column; justify-content: space-between; }
.hbar { justify-content: space-between; }
.btn, .thumb { width: 16px; height: 16px; background: #d4d0c8; border: 1px solid; border-color: #f4f2ee #404040 #404040 #f4f2ee; box-shadow: inset -1px -1px #808080, inset 1px 1px #fff; display: flex; align-items: center; justify-content: center; }
.dis svg { fill: #808080; }
.map .vbar { padding-top: 1px; }
.map .vbar .thumb { height: 40px; margin-bottom: 42px; }
.map .hbar .thumb { width: 33px; margin-left: -5px; }
.map .hbar { padding: 0 1px; }
.corner { background: #d4d0c8; }
.zoomfit { position: absolute; left: 405px; top: 591px; border: 1px solid #aaa; }

/* Notes */
.notes { width: 548px; height: 624px; margin-top: 2px; background: #adbddb; border: 1px solid #1c3557; }
.nhead { height: 23px; display: grid; align-items: center; padding-left: 3px; grid-template-columns: 25px 11px 314px 22px 23px 6px 28px 24px 23px 12px 15px 39px; }
.dark { width: 1px; height: 17px; background: #263f68; }
.ntitle { font: bold 11px/14px "Liberation Sans", sans-serif; letter-spacing: .1px; color: #304a74; }
.close { font: 10px/14px "DejaVu Sans Mono", monospace; color: #203354; }
.ai, .abtn { position: relative; display: block; width: 14px; height: 14px; }
.abtn { width: 22px; height: 22px; padding: 4px; background: #fffce2; border: 1px solid #d3cb80; }
.ai svg + svg { position: absolute; left: 0; top: 0; }
.ai b, .abtn b { position: absolute; left: 3px; top: 0; font: bold 13px/16px "Liberation Serif", serif; color: #101820; }
.abtn b { left: 4px; top: 2px; font-size: 17px; }
.ntool { height: 26px; display: grid; align-items: center; padding-left: 7px; background: linear-gradient(#f3f8fd, #dce8f5 60%, #c7d9ed); border-bottom: 1px solid #1c3557;
  grid-template-columns: 23px 4px 41px 4px 29px 23px 23px 9px 25px 13px 24px 11px 13px 21px 11px 24px 231px 8px; }
.tsep { width: 1px; height: 14px; background: #9daec6; }
.serif { font: bold 18px/20px "Liberation Serif", serif; color: #2a3340; }
.hot { display: flex; align-items: center; justify-content: center; gap: 6px; height: 22px; width: 24px; border: 1px solid #c5a148; border-radius: 3px; background: linear-gradient(#ffe9a2, #ffd968); }
.tsep + .hot:nth-child(3) { width: 37px; }
.fc { width: 17px; height: 16px; border-bottom: 4px solid #000; font: bold 15px/12px "Liberation Serif", serif; color: #2a62ae; text-align: center; }
.ovf { height: 25px; display: flex; align-items: flex-end; padding: 0 0 2px 1px; background: linear-gradient(#c6d3e6, #7f92b0); border-radius: 4px 0 0; }
.paper { margin: 5px 6px 0; height: 563px; border: 1px solid #142c50; background: #fcfcfc; color: #000; }
.paper h1 { margin: 0 0 0 1px; height: 28px; border-bottom: 1px solid #142c50; padding-left: 4px; font: 14px/26px "Noto Sans CJK SC", sans-serif; letter-spacing: 1px; white-space: nowrap; }
.paper h1 b { font: bold 12.5px/24px "DejaVu Sans", sans-serif; letter-spacing: .8px; }
.body { height: 533px; display: grid; grid-template: 516px 17px / 515px 17px; padding-top: 1px; }
.body .hbar { height: 16px; }
.body .vbar { margin-bottom: 1px; }
.text { position: relative; }
ul { list-style: none; margin: 0; padding: 7px 0 0 30px; }
li { position: relative; margin-bottom: 8px; }
li:first-child { padding-bottom: 1px; }
li::before { content: ""; position: absolute; left: -24px; top: 8px; width: 5px; height: 5px; border-radius: 50%; background: #000; }
li h2, li p { margin: 0; height: 15px; font: 14px/15px "Noto Sans CJK SC", sans-serif; letter-spacing: 2px; white-space: nowrap; }
li h2 { font-weight: 700; }
s { font: 13px/15px "Liberation Sans", sans-serif; letter-spacing: -.05px; text-decoration: none; }
s.sp { text-decoration: underline wavy #d32222 .7px; }
s.apk { letter-spacing: .5px; }
.ibeam { position: absolute; left: 284px; top: 68px; }

/* Document tabs */
.docs { height: 25px; display: grid; align-items: center; padding-left: 5px; border-top: 1px solid #5c7291; background: linear-gradient(#edf4fc, #d6e4f4); grid-template-columns: 18px 20px 9px 11px 919px 8px; }
.flip { transform: scaleX(-1); }
.doctab { position: relative; display: flex; align-items: center; height: 24px; padding: 0 0 4px 29px; width: 203px; line-height: 16px; color: #31517e; white-space: nowrap; align-self: start; }
.doctab > svg, .doctab > span { position: relative; }
.doctab span { width: 132px; margin-left: 8px; font-weight: bold; }
.doctab .shape { position: absolute; left: 0; top: -1px; }

/* Side tabs */
.side { width: 25px; padding: 4px 0 0 1px; }
.t { position: relative; width: 22px; border: 1px solid #1c3557; border-top: 0; background: #adbddb; display: flex; flex-direction: column; align-items: center; padding-top: 3px; }
.t1 { border-top: 1px solid #1c3557; }
.t span { writing-mode: vertical-rl; font-size: 11px; letter-spacing: -.25px; line-height: 16px; margin-top: 5px; white-space: nowrap; }
.t::after { content: ""; position: absolute; right: -1px; top: -1px; width: 6px; height: 6px; background: linear-gradient(45deg, #adbddb 44%, #1c3557 44% 56%, #b6cbe5 56%); }
.t1 { height: 75px; } .t2 { height: 68px; } .t3 { height: 73px; } .t4 { height: 79px; } .t5 { height: 79px; } .t6 { height: 62px; } .t7 { height: 61px; } .t8 { height: 68px; }

/* Status bar */
.status { height: 24px; display: grid; align-items: center; padding-left: 4px; border-top: 1px solid #8ca1bf; background: linear-gradient(#d2e1f3, #b4cae6); white-space: nowrap;
  grid-template-columns: 19px 28px 7px 19px 40px 389px 10px 24px 98px 23px 7px 19px 12px 7px 19px 10px 26px 28px 40px 25px 170px; }
.status > span { letter-spacing: -.1px; margin-top: -2px; }
.status > .hot { width: 22px; height: 19px; margin-top: 0; }
.ime { width: 169px; height: 22px; display: grid; align-items: center; padding-left: 4px; background: #fafcff; border: 1px solid #a9c1de; grid-template-columns: 23px 21px 20px 17px 23px 19px 20px 14px; }
.ime b { font: bold 15px/18px "Noto Sans CJK SC", sans-serif; color: #4389cd; margin-top: -3px; }
.tilt { transform: rotate(-6deg); }

/* Taskbar */
.taskbar { height: 43px; display: grid; align-items: center; padding: 1px 0 0 2px; border-top: 1px solid #fff; background: #d4d0c8;
  grid-template-columns: 64px 42px 50px 59px 48px 43px 50px 50px 50px 292px 19px 9px 18px 4px 221px; }
.tb { width: 48px; height: 37px; display: flex; align-items: center; justify-content: center; border: 1px solid; border-color: #fff #404040 #404040 #fff; box-shadow: inset -1px -1px #808080; }
.start { gap: 2px; font: 12px/16px "Noto Sans CJK SC", sans-serif; color: #000; }
.stack { width: 46px; box-shadow: inset -1px -1px #808080, 2px 0 #d4d0c8, 3px 0 #404040; }
.on { background: #fbfaf9; border-color: #404040 #fff #fff #404040; box-shadow: inset 1px 1px #808080; }
.ch { font: 10.5px/14px "DejaVu Sans Mono", monospace; color: #000; margin-top: -4px; }
.groove { width: 2px; height: 22px; border-left: 1px solid #888; border-right: 1px solid #fff; }
.tray { height: 38px; display: grid; align-items: center; padding-left: 6px; border: 1px solid; border-color: #808080 #fff #fff #808080; grid-template-columns: 16px 25px 23px 24px 24px 25px 61px 16px; }
.clock { font: 10px/16px "DejaVu Sans Mono", monospace; color: #000; text-align: center; white-space: nowrap; margin-left: -3px; }
```
